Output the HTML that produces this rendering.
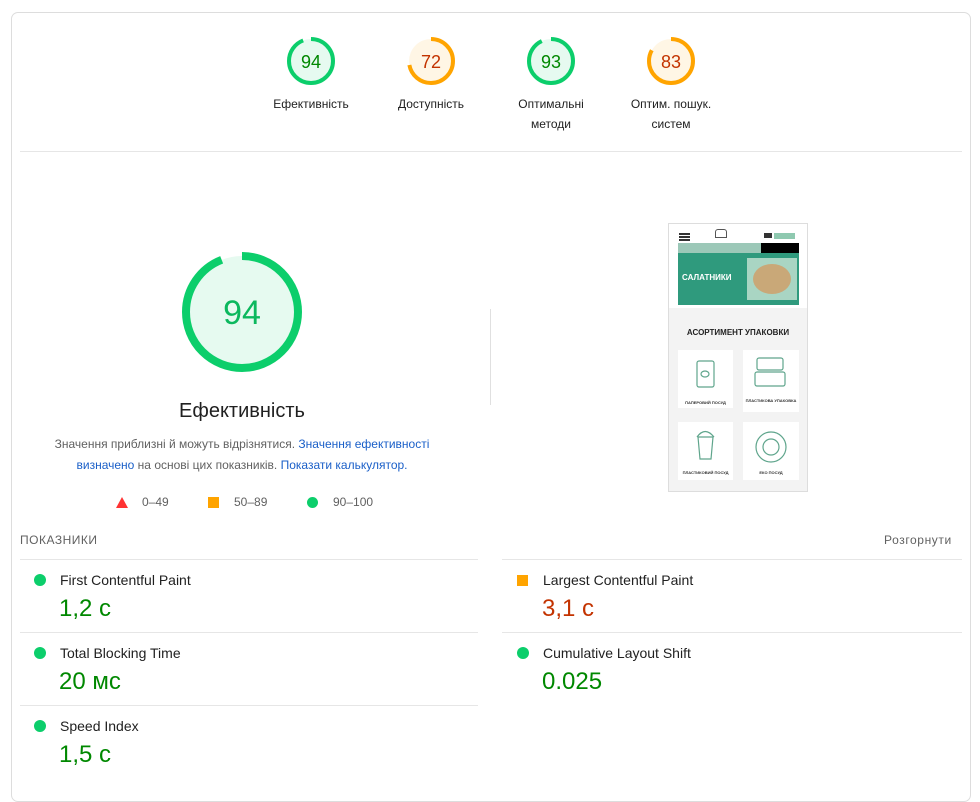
<!DOCTYPE html>
<html><head><meta charset="utf-8"><style>
*{margin:0;padding:0;box-sizing:border-box}
body{width:980px;height:780px;background:#fff;font-family:"Liberation Sans",Arial,sans-serif;color:#212121;position:relative;overflow:hidden}
.a{position:absolute}
.frame{left:11px;top:12px;width:960px;height:790px;border:1px solid #ddd;border-radius:7px}
.lbl{font-size:12px;text-align:center;width:120px;line-height:20px;color:#212121}
.hr{height:1px;background:#e6e6e6}
.mname{font-size:14px;color:#212121}
.mval{font-size:24px}
.dot{width:12px;height:12px;border-radius:50%;background:#0cce6b}
.sq{width:11px;height:11px;background:#ffa400}
.link{color:#1a5fc8}
</style></head><body>
<div class="a frame"></div>

<svg class="a" style="left:0;top:0" width="980" height="160">
 <g fill="none" stroke-width="4">
  <circle cx="311" cy="61" r="22" fill="rgba(12,206,107,0.1)" stroke="#0cce6b" stroke-dasharray="130 200" transform="rotate(-90 311 61)"/>
  <circle cx="431" cy="61" r="22" fill="rgba(255,164,0,0.1)" stroke="#ffa400" stroke-dasharray="99.5 200" transform="rotate(-90 431 61)"/>
  <circle cx="551" cy="61" r="22" fill="rgba(12,206,107,0.1)" stroke="#0cce6b" stroke-dasharray="128.5 200" transform="rotate(-90 551 61)"/>
  <circle cx="671" cy="61" r="22" fill="rgba(255,164,0,0.1)" stroke="#ffa400" stroke-dasharray="114.7 200" transform="rotate(-90 671 61)"/>
 </g>
 <g font-family="Liberation Sans, Arial, sans-serif" font-size="18" text-anchor="middle">
  <text x="311" y="68" fill="#008800">94</text>
  <text x="431" y="68" fill="#c33300">72</text>
  <text x="551" y="68" fill="#008800">93</text>
  <text x="671" y="68" fill="#c33300">83</text>
 </g>
</svg>
<div class="a lbl" style="left:251px;top:94px">Ефективність</div>
<div class="a lbl" style="left:371px;top:94px">Доступність</div>
<div class="a lbl" style="left:491px;top:94px">Оптимальні<br>методи</div>
<div class="a lbl" style="left:611px;top:94px">Оптим. пошук.<br>систем</div>
<div class="a hr" style="left:20px;top:151px;width:942px"></div>

<svg class="a" style="left:170px;top:240px" width="144" height="144">
 <circle cx="72" cy="72" r="56" fill="rgba(12,206,107,0.1)" stroke="#0cce6b" stroke-width="8" stroke-dasharray="330.7 400" transform="rotate(-90 72 72)"/>
 <text x="72" y="84" text-anchor="middle" font-family="Liberation Sans, Arial, sans-serif" font-size="34" fill="#0cb85e">94</text>
</svg>
<div class="a" style="left:92px;top:400px;width:300px;text-align:center;font-size:20px;color:#212121">Ефективність</div>
<div class="a" style="left:40px;top:434px;width:404px;text-align:center;font-size:12px;line-height:21px;color:#616161">Значення приблизні й можуть відрізнятися. <span class="link">Значення ефективності визначено</span> на основі цих показників. <span class="link">Показати калькулятор.</span></div>
<svg class="a" style="left:115px;top:496px" width="14" height="13"><polygon points="7,1 13,12 1,12" fill="#ff3333"/></svg>
<div class="a" style="left:142px;top:495px;font-size:12px;color:#616161">0–49</div>
<div class="a sq" style="left:208px;top:497px"></div>
<div class="a" style="left:234px;top:495px;font-size:12px;color:#616161">50–89</div>
<div class="a dot" style="left:307px;top:497px;width:11px;height:11px"></div>
<div class="a" style="left:333px;top:495px;font-size:12px;color:#616161">90–100</div>

<div class="a" style="left:490px;top:309px;width:1px;height:96px;background:#e0e0e0"></div>

<!-- thumbnail -->
<div class="a" style="left:668px;top:223px;width:140px;height:269px;border:1px solid #ddd;background:#fff">
 <div class="a" style="left:10px;top:9px;width:11px;height:2px;background:#333;box-shadow:0 3px #333,0 6px #333"></div>
 <div class="a" style="left:46px;top:5px;width:12px;height:9px;border:1px solid #555;border-radius:3px 3px 0 0"></div>
 <div class="a" style="left:95px;top:9px;width:8px;height:5px;background:#333"></div>
 <div class="a" style="left:105px;top:9px;width:21px;height:6px;background:#8fc9b0"></div>
 <div class="a" style="left:9px;top:19px;width:83px;height:10px;background:#9cc8b8"></div>
 <div class="a" style="left:92px;top:19px;width:38px;height:10px;background:#000"></div>
 <div class="a" style="left:9px;top:29px;width:121px;height:52px;background:#2f9a7d"></div>
 <div class="a" style="left:78px;top:34px;width:50px;height:42px;background:#a9d5c3"></div>
 <div class="a" style="left:84px;top:40px;width:38px;height:30px;background:#c9a878;border-radius:50%"></div>
 <div class="a" style="left:13px;top:49px;font-size:8px;font-weight:bold;color:#fff">САЛАТНИКИ</div>
 <div class="a" style="left:0;top:84px;width:138px;height:183px;background:#f3f3f3"></div>
 <div class="a" style="left:0;top:104px;width:138px;text-align:center;font-size:8px;font-weight:bold;color:#222">АСОРТИМЕНТ УПАКОВКИ</div>
 <div class="a" style="left:9px;top:126px;width:55px;height:58px;background:#fff"></div>
 <div class="a" style="left:74px;top:126px;width:56px;height:62px;background:#fff"></div>
 <div class="a" style="left:9px;top:198px;width:55px;height:58px;background:#fff"></div>
 <div class="a" style="left:74px;top:198px;width:56px;height:58px;background:#fff"></div>
 <svg class="a" style="left:0;top:120px" width="138" height="140" fill="none" stroke="#5fa58c" stroke-width="1.2">
  <rect x="28" y="17" width="17" height="26" rx="2"/><ellipse cx="36" cy="30" rx="4" ry="3"/>
  <rect x="88" y="14" width="26" height="12" rx="2"/><rect x="86" y="28" width="30" height="14" rx="2"/>
  <path d="M29 93 L31 115 L42 115 L44 93 Z"/><path d="M28 93 Q36 82 45 93"/>
  <circle cx="102" cy="103" r="15"/><circle cx="102" cy="103" r="8"/>
 </svg>
 <div class="a" style="left:9px;top:176px;width:55px;text-align:center;font-size:4px;font-weight:bold;color:#333">ПАПЕРОВИЙ ПОСУД</div>
 <div class="a" style="left:74px;top:174px;width:56px;text-align:center;font-size:4px;font-weight:bold;color:#333">ПЛАСТИКОВА УПАКОВКА</div>
 <div class="a" style="left:9px;top:246px;width:55px;text-align:center;font-size:4px;font-weight:bold;color:#333">ПЛАСТИКОВИЙ ПОСУД</div>
 <div class="a" style="left:74px;top:246px;width:56px;text-align:center;font-size:4px;font-weight:bold;color:#333">ЕКО ПОСУД</div>
</div>

<div class="a" style="left:20px;top:533px;font-size:12px;color:#616161;letter-spacing:0.5px">ПОКАЗНИКИ</div>
<div class="a" style="left:884px;top:533px;font-size:12px;color:#616161;letter-spacing:0.6px">Розгорнути</div>
<div class="a hr" style="left:20px;top:559px;width:458px"></div>
<div class="a hr" style="left:502px;top:559px;width:460px"></div>
<div class="a hr" style="left:20px;top:632px;width:458px"></div>
<div class="a hr" style="left:502px;top:632px;width:460px"></div>
<div class="a hr" style="left:20px;top:705px;width:458px"></div>

<div class="a dot" style="left:34px;top:574px"></div>
<div class="a mname" style="left:60px;top:572px">First Contentful Paint</div>
<div class="a mval" style="left:59px;top:595px;color:#008800">1,2 с</div>
<div class="a dot" style="left:34px;top:647px"></div>
<div class="a mname" style="left:60px;top:645px">Total Blocking Time</div>
<div class="a mval" style="left:59px;top:668px;color:#008800">20 мс</div>
<div class="a dot" style="left:34px;top:720px"></div>
<div class="a mname" style="left:60px;top:718px">Speed Index</div>
<div class="a mval" style="left:59px;top:741px;color:#008800">1,5 с</div>

<div class="a sq" style="left:517px;top:575px"></div>
<div class="a mname" style="left:543px;top:572px">Largest Contentful Paint</div>
<div class="a mval" style="left:542px;top:595px;color:#c33300">3,1 с</div>
<div class="a dot" style="left:517px;top:647px"></div>
<div class="a mname" style="left:543px;top:645px">Cumulative Layout Shift</div>
<div class="a mval" style="left:542px;top:668px;color:#008800">0.025</div>
</body></html>
